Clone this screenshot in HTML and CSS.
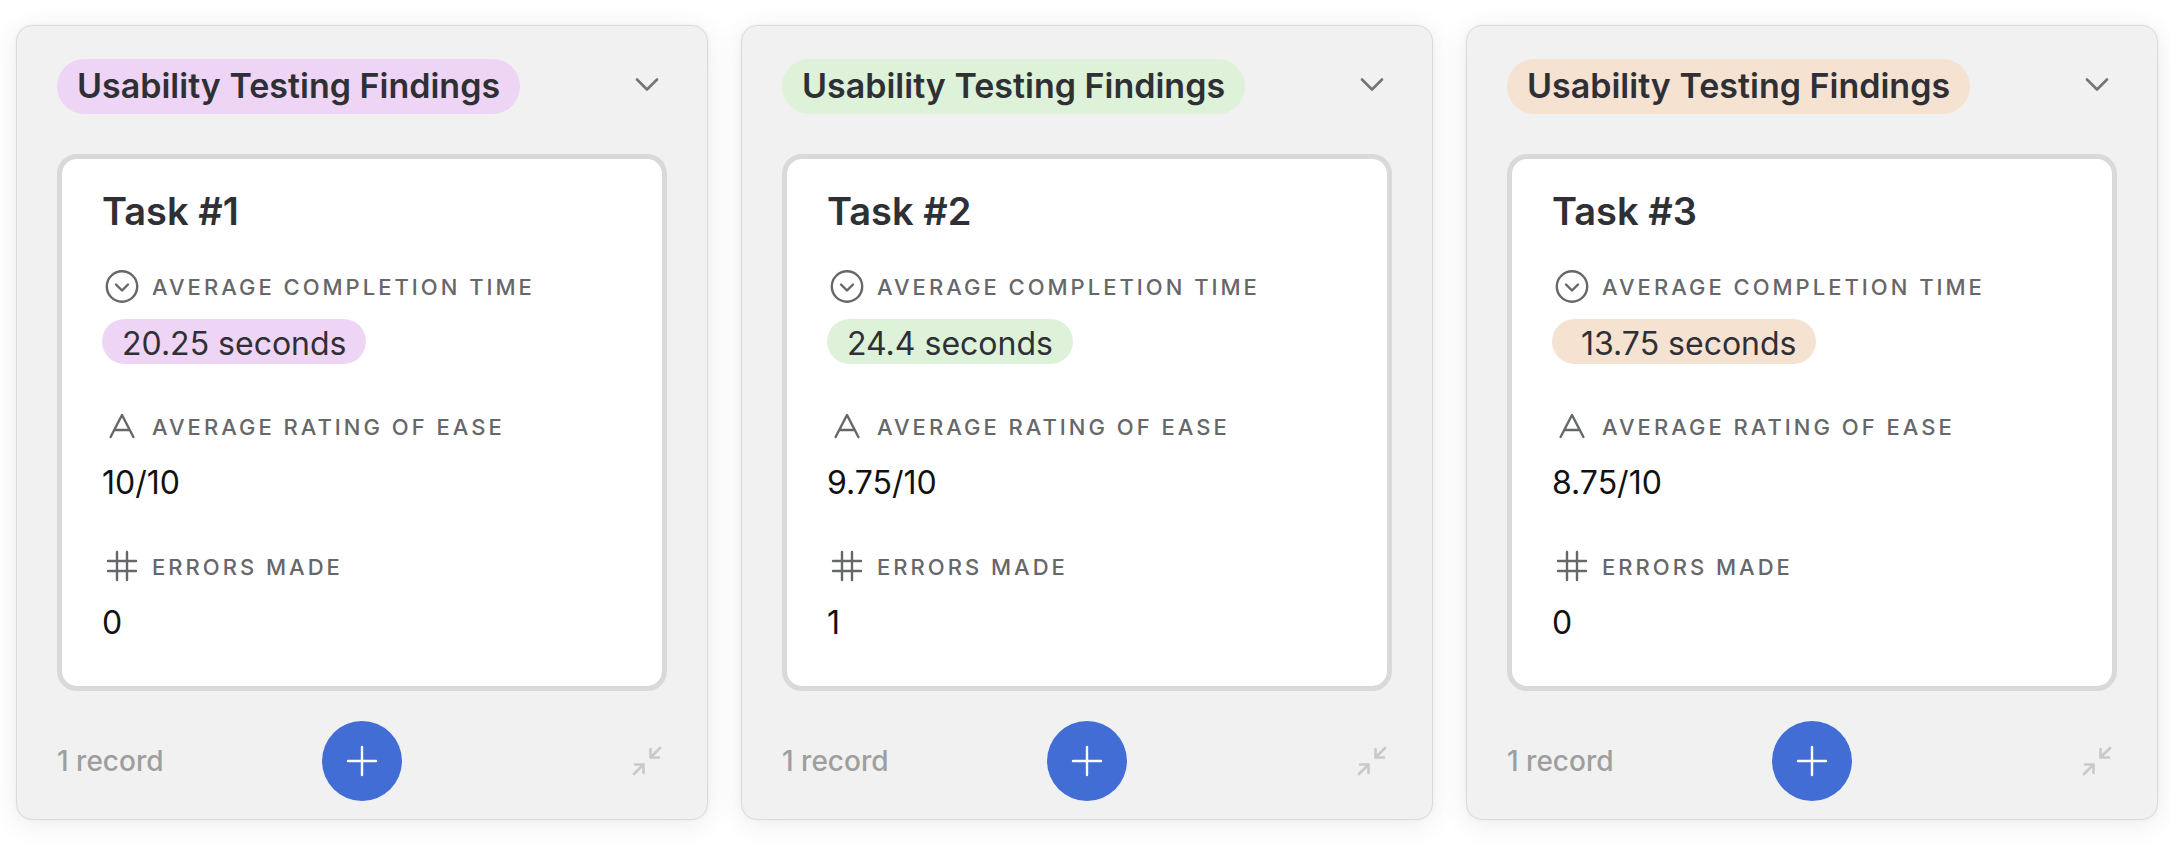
FILE: index.html
```html
<!DOCTYPE html>
<html lang="en">
<head>
<meta charset="utf-8">
<title>Usability Testing Findings</title>
<link rel="stylesheet" href="styles.css">
</head>
<body>
<svg class="sprite" aria-hidden="true">
  <symbol id="chevron" viewBox="0 0 40 40"><path d="M10 12.500 20 22.500 30 12.500"/></symbol>
  <symbol id="select" viewBox="0 0 40 40"><circle cx="20" cy="19.500" r="15.2"/><path d="M14 17.500 20 23.500 26 17.500"/></symbol>
  <symbol id="text" viewBox="0 0 40 40"><path d="M8.6 30 20 8 31.400 30M12.500 23H27.500"/></symbol>
  <symbol id="number" viewBox="0 0 40 40"><path d="M15 5V33M25 5V33M6 14H34M6 24H34"/></symbol>
  <symbol id="plus" viewBox="0 0 40 40"><path d="M20 6V34M6 20H34"/></symbol>
  <symbol id="collapse" viewBox="0 0 40 40"><path d="M33 7 23.500 16.500M23.500 8V16.500H32M7 33 16.500 23.500M8 23.500H16.500V32"/></symbol>
</svg>
<main class="board">
  <section class="column purple">
    <header class="column-header">
      <h2 class="column-title">Usability Testing Findings</h2>
      <button class="icon-button" type="button" aria-label="Column options"><svg class="icon"><use href="#chevron"/></svg></button>
    </header>
    <article class="card">
      <h3 class="card-title">Task #1</h3>
      <dl class="fields">
        <div class="field"><dt class="label"><svg class="icon"><use href="#select"/></svg>Average completion time</dt><dd class="value"><span class="tag">20.25 seconds</span></dd></div>
        <div class="field"><dt class="label"><svg class="icon"><use href="#text"/></svg>Average rating of ease</dt><dd class="value">10/10</dd></div>
        <div class="field"><dt class="label"><svg class="icon"><use href="#number"/></svg>Errors made</dt><dd class="value">0</dd></div>
      </dl>
    </article>
    <footer class="column-footer">
      <span class="count">1 record</span>
      <button class="add-button" type="button" aria-label="Add record"><svg class="icon"><use href="#plus"/></svg></button>
      <button class="icon-button faint" type="button" aria-label="Collapse column"><svg class="icon"><use href="#collapse"/></svg></button>
    </footer>
  </section>
  <section class="column green">
    <header class="column-header">
      <h2 class="column-title">Usability Testing Findings</h2>
      <button class="icon-button" type="button" aria-label="Column options"><svg class="icon"><use href="#chevron"/></svg></button>
    </header>
    <article class="card">
      <h3 class="card-title">Task #2</h3>
      <dl class="fields">
        <div class="field"><dt class="label"><svg class="icon"><use href="#select"/></svg>Average completion time</dt><dd class="value"><span class="tag">24.4 seconds</span></dd></div>
        <div class="field"><dt class="label"><svg class="icon"><use href="#text"/></svg>Average rating of ease</dt><dd class="value">9.75/10</dd></div>
        <div class="field"><dt class="label"><svg class="icon"><use href="#number"/></svg>Errors made</dt><dd class="value">1</dd></div>
      </dl>
    </article>
    <footer class="column-footer">
      <span class="count">1 record</span>
      <button class="add-button" type="button" aria-label="Add record"><svg class="icon"><use href="#plus"/></svg></button>
      <button class="icon-button faint" type="button" aria-label="Collapse column"><svg class="icon"><use href="#collapse"/></svg></button>
    </footer>
  </section>
  <section class="column orange">
    <header class="column-header">
      <h2 class="column-title">Usability Testing Findings</h2>
      <button class="icon-button" type="button" aria-label="Column options"><svg class="icon"><use href="#chevron"/></svg></button>
    </header>
    <article class="card">
      <h3 class="card-title">Task #3</h3>
      <dl class="fields">
        <div class="field"><dt class="label"><svg class="icon"><use href="#select"/></svg>Average completion time</dt><dd class="value"><span class="tag">&nbsp;13.75 seconds</span></dd></div>
        <div class="field"><dt class="label"><svg class="icon"><use href="#text"/></svg>Average rating of ease</dt><dd class="value">8.75/10</dd></div>
        <div class="field"><dt class="label"><svg class="icon"><use href="#number"/></svg>Errors made</dt><dd class="value">0</dd></div>
      </dl>
    </article>
    <footer class="column-footer">
      <span class="count">1 record</span>
      <button class="add-button" type="button" aria-label="Add record"><svg class="icon"><use href="#plus"/></svg></button>
      <button class="icon-button faint" type="button" aria-label="Collapse column"><svg class="icon"><use href="#collapse"/></svg></button>
    </footer>
  </section>
</main>
</body>
</html>
```
FILE: styles.css
```css
* { box-sizing: border-box; }

body {
  margin: 0;
  background: #fff;
  color: #2f3035;
  font-family: Inter, "Liberation Sans", sans-serif;
}

h2, h3, dl, dd { margin: 0; }

button {
  border: 0;
  padding: 0;
  background: none;
  color: inherit;
  cursor: pointer;
}

.sprite { display: none; }

.icon {
  display: block;
  flex: none;
  width: 40px;
  height: 40px;
  fill: none;
  stroke: currentColor;
  stroke-width: 2.4;
  stroke-linecap: round;
  stroke-linejoin: round;
}

.board {
  display: grid;
  grid-template-columns: repeat(3, minmax(0, 1fr));
  gap: 33px;
  padding: 25px 12px 24px 16px;
}

.column {
  padding: 33px 40px 18px;
  border: 1px solid #dadada;
  border-radius: 16px;
  background: #f1f1f1;
  box-shadow: 0 0 4px rgba(0, 0, 0, 0.04), 0 4px 28px rgba(0, 0, 0, 0.08);
}

.purple { --tint: #eed5f5; }
.green { --tint: #ddf2d8; }
.orange { --tint: #f5e2d1; }

.column-header {
  display: flex;
  align-items: center;
  justify-content: space-between;
  margin-bottom: 40px;
}

.column-title {
  padding: 0 20px 2px;
  border-radius: 28px;
  background: var(--tint);
  font-size: 34px;
  font-weight: 600;
  line-height: 53px;
  white-space: nowrap;
}

.icon-button { color: #757575; }
.icon-button .icon { stroke-width: 2.6; }
.faint { color: #c9c9c9; }

.card {
  padding: 28px 40px 41px;
  border: 5px solid #d9d9d9;
  border-radius: 20px;
  background: #fff;
}

.card-title {
  margin-bottom: 32px;
  font-size: 38px;
  font-weight: 600;
  line-height: 48px;
}

.fields {
  display: grid;
  gap: 42px;
}

.label {
  display: flex;
  align-items: center;
  gap: 10px;
  margin-bottom: 12px;
  color: #666769;
  font-size: 22px;
  font-weight: 500;
  letter-spacing: 3px;
  line-height: 40px;
  text-transform: uppercase;
  white-space: nowrap;
}

.value {
  padding-top: 2px;
  color: #111;
  font-size: 32px;
  line-height: 44px;
}

.value:has(.tag) {
  padding: 0 0 1px;
}

.tag {
  display: inline-block;
  padding: 4px 20px 0;
  border-radius: 23px;
  background: var(--tint);
  color: #2f3035;
  line-height: 41px;
  vertical-align: top;
}

.column-footer {
  display: grid;
  grid-template-columns: 1fr auto 1fr;
  align-items: center;
  margin-top: 30px;
}

.column-footer .icon-button { justify-self: end; }

.count {
  color: #9e9e9e;
  font-size: 28px;
  font-weight: 500;
}

.add-button {
  display: grid;
  place-items: center;
  width: 80px;
  height: 80px;
  border-radius: 50%;
  background: #416dd4;
  color: #fff;
}
```
